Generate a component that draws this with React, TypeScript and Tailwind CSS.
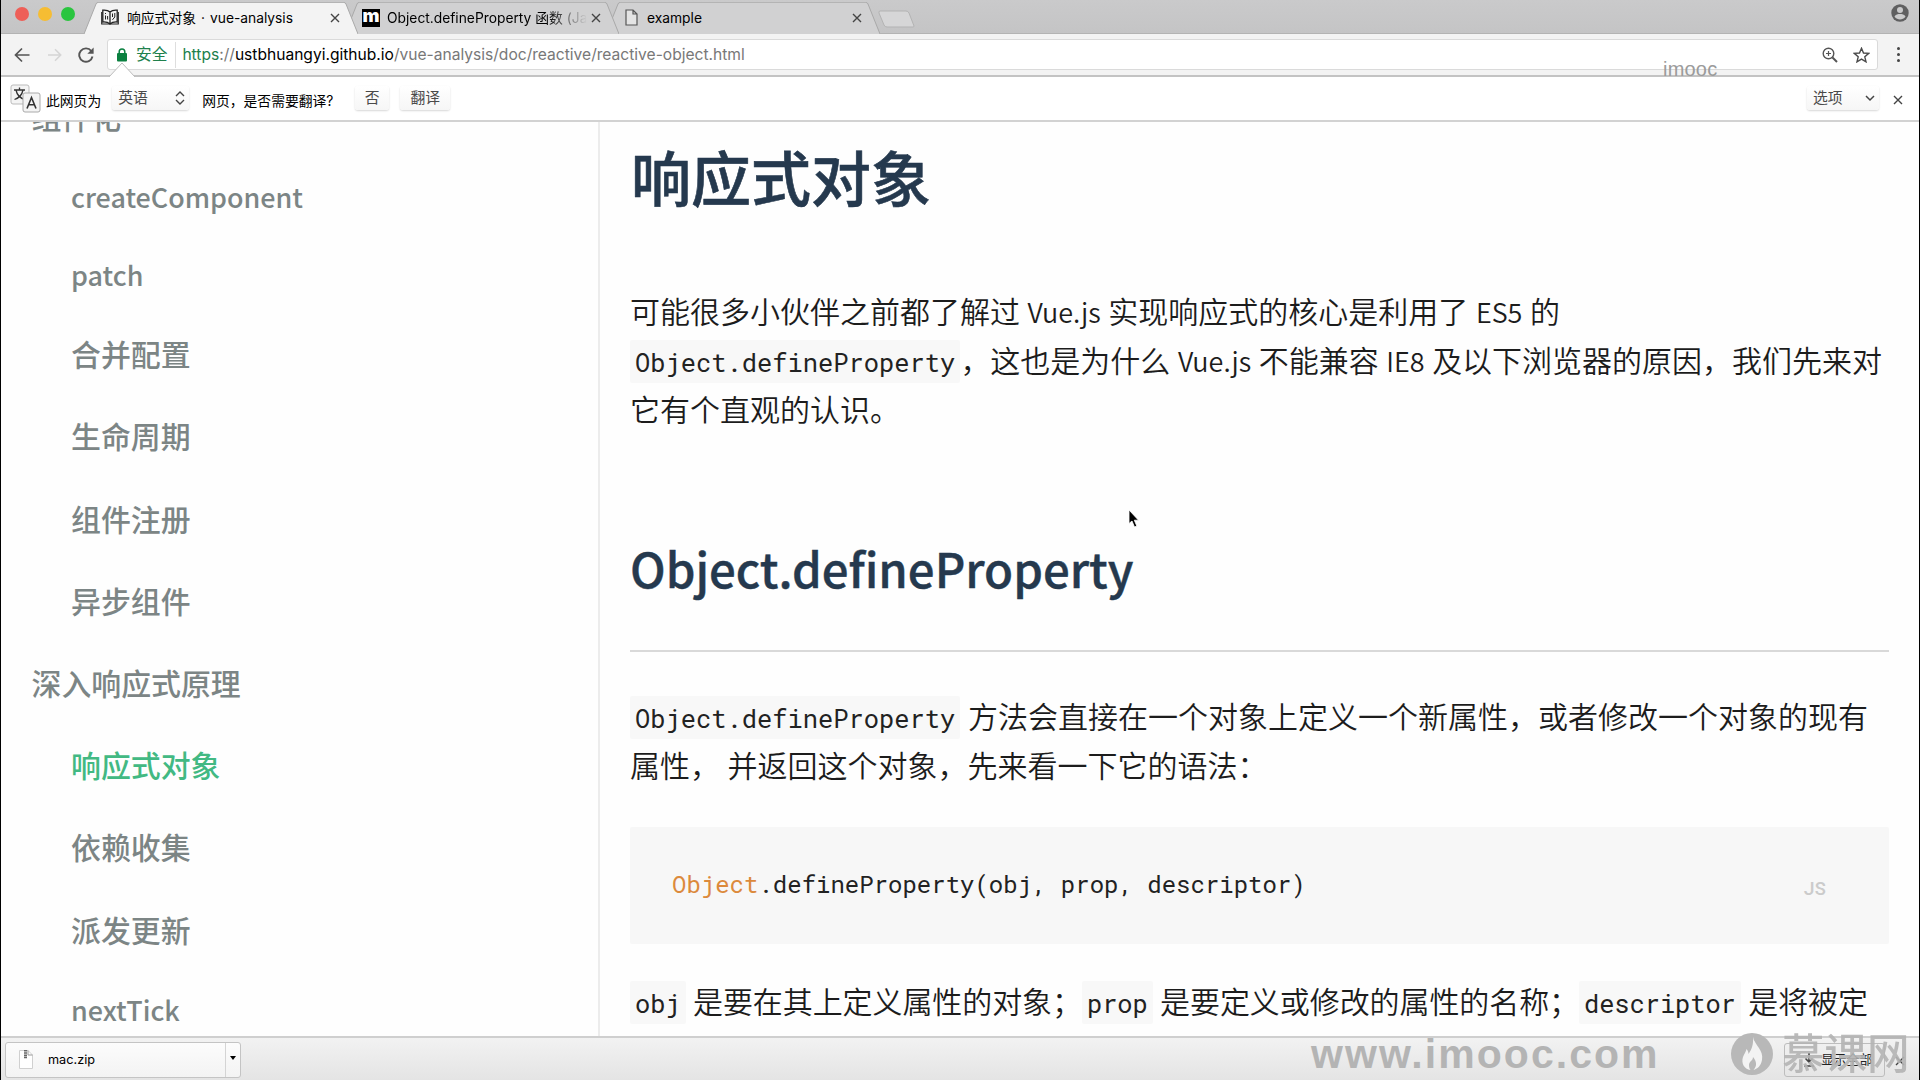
import React from 'react';

function TabEdge({ flip = false, fill }: { flip?: boolean; fill: string }) {
  return (
    <svg width="14" height="32" viewBox="0 0 14 32" className={flip ? 'shrink-0 -scale-x-100' : 'shrink-0'}>
      <path d="M0 32 L12 2 Q12.6 .5 14 .5 V32Z" fill={fill} />
      <path d="M0 32 L12 2 Q12.6 .5 14 .5" fill="none" stroke="#a9a9a9" strokeWidth="1" />
    </svg>
  );
}

function Cross({ className = '' }: { className?: string }) {
  return (
    <svg width="10" height="10" viewBox="0 0 10 10" className={`shrink-0 ${className}`}>
      <path d="M1 1 L9 9 M9 1 L1 9" stroke="#444" strokeWidth="1.4" />
    </svg>
  );
}

function Tab({ icon, title, active = false, className = '' }: { icon: React.ReactNode; title: React.ReactNode; active?: boolean; className?: string }) {
  const fill = active ? '#f3f3f3' : '#d1d1d2';
  return (
    <div className={`relative flex h-8 w-[274px] shrink-0 ${className}`}>
      <TabEdge fill={fill} />
      <div className={`flex min-w-0 flex-1 items-center border-t border-[#b4b4b4] pr-1 pb-[2px] pl-[3px] ${active ? 'bg-[#f3f3f3]' : 'bg-[#d1d1d2]'}`}>
        {icon}
        <span className="min-w-0 flex-1 overflow-hidden text-[13.8px] leading-5 whitespace-nowrap text-black">{title}</span>
        <Cross />
      </div>
      <TabEdge flip fill={fill} />
    </div>
  );
}

function BookIcon() {
  return (
    <svg width="18" height="17" viewBox="0 0 18 17" className="mr-2 shrink-0" fill="none" stroke="#222" strokeWidth="1.3">
      <path d="M9 3 C7 1.2 4 1 1.8 1.2 V13 C4.500 12.800 7 13.200 9 15 C11 13.200 13.500 12.800 16.200 13 V1.200 C14 1 11 1.200 9 3Z M9 3 V15" />
      <path d="M.7 3 V15 H17.300 V3" strokeWidth="1.100" />
      <path d="M4.500 4 V5 M4.500 6.500 V10.500 M6.600 7 V10.500 M11.500 4.500 V8 M13.800 4 V8 L11.500 10.800" strokeWidth="1" />
    </svg>
  );
}

function FileIcon() {
  return (
    <svg width="13" height="17" viewBox="0 0 13 17" className="ml-[2px] mr-[9px] shrink-0" fill="#e4e4e4" stroke="#555" strokeWidth="1.200">
      <path d="M1 1 H8 L12 5 V16 H1Z M8 1 V5 H12" />
    </svg>
  );
}

function PushButton({ children, className = '' }: { children: React.ReactNode; className?: string }) {
  return (
    <div className={`-mt-px flex h-6 shrink-0 items-center rounded-[3px] bg-gradient-to-b from-white to-[#f6f6f6] text-[14.800px] leading-none text-[#4a4a4a] shadow-[0_1px_2px_rgba(0,0,0,0.16)] ${className}`}>
      {children}
    </div>
  );
}

function TitleBar() {
  return (
    <div className="flex h-[34px] shrink-0 items-start border-b border-[#b3b3b3] bg-gradient-to-b from-[#cacacb] to-[#c4c4c5]">
      <div className="flex w-[83px] shrink-0 gap-[9px] pt-[7px] pl-[14px]">
        <span className="size-[14px] rounded-full bg-[#ee5f58]" />
        <span className="size-[14px] rounded-full bg-[#f6bd33]" />
        <span className="size-[14px] rounded-full bg-[#2ac53f]" />
      </div>
      <div className="mt-[2px] flex flex-1">
        <Tab className="z-30 -mb-px" active icon={<BookIcon />} title={<span>响应式对象<span className="mx-[5px]">·</span>vue-analysis</span>} />
        <Tab
          className="z-20 -ml-[13px]"
          icon={<span className="mr-[7px] flex size-[18px] shrink-0 items-center justify-center bg-black pb-[3px] text-[18px] leading-none font-black text-white">m</span>}
          title={
            <span className="bg-gradient-to-r from-black from-80% to-transparent bg-clip-text text-transparent">Object.defineProperty 函数 (Ja</span>
          }
        />
        <Tab className="z-10 -ml-[13px]" icon={<FileIcon />} title="example" />
        <svg width="38" height="20" viewBox="0 0 38 20" className="mt-[7px] -ml-[3px]">
          <path d="M3 2 H29 Q31 2 32 4 L37 17 Q37 18 36 18 H10 Q8 18 7 16 L2 4 Q1.500 2 3 2Z" fill="#d6d6d7" stroke="#b3b3b3" />
        </svg>
      </div>
      <svg width="18" height="18" viewBox="0 0 18 18" className="mt-1 mr-[10px]">
        <circle cx="9" cy="9" r="8.700" fill="#5f5f60" />
        <circle cx="9" cy="6" r="3" fill="#cacacb" />
        <path d="M3.500 12.500 C4.500 10.500 7 10 9 10 C11 10 13.500 10.500 14.500 12.500 C13 14.700 11 15.500 9 15.500 C7 15.500 5 14.700 3.500 12.500Z" fill="#cacacb" />
      </svg>
    </div>
  );
}

function Toolbar() {
  return (
    <div className="relative flex h-[43px] shrink-0 items-center border-b-2 border-[#c3c3c3] bg-[#f3f3f3]">
      <svg width="16" height="16" viewBox="0 0 16 16" className="ml-[13px]" fill="none" stroke="#555" strokeWidth="1.700">
        <path d="M15.500 8 H2 M8 1.500 L1.500 8 L8 14.500" />
      </svg>
      <svg width="14" height="14" viewBox="0 0 16 16" className="ml-[18px]" fill="none" stroke="#d5d5d5" strokeWidth="1.800">
        <path d="M0 8 H14 M8 1.500 L14.500 8 L8 14.500" />
      </svg>
      <svg width="16" height="16" viewBox="0 0 16 16" className="ml-4" fill="none" stroke="#555" strokeWidth="1.900">
        <path d="M13.300 4 A6.700 6.700 0 1 0 14.500 9.500" />
        <path d="M15.600 .5 V6.800 H9.300Z" fill="#555" stroke="none" />
      </svg>
      <div className="ml-[13px] flex h-[31px] w-[1771px] items-center rounded-[3px] border border-[#dadada] bg-white">
        <svg width="10" height="14" viewBox="0 0 10 14" className="ml-[9px]">
          <rect y="5" width="10" height="8.500" rx="1" fill="#0b8040" />
          <path d="M2.200 6 V3.800 A2.800 2.800 0 0 1 7.800 3.800 V6" fill="none" stroke="#0b8040" strokeWidth="1.500" />
        </svg>
        <span className="ml-[9px] text-[15.700px] text-[#20804c]">安全</span>
        <span className="ml-2 h-[26px] w-px bg-[#dedede]" />
        <span className="ml-[6px] flex-1 text-[15.580px] whitespace-nowrap text-[#787878]">
          <span className="text-[#20804c]">https</span>://<span className="text-black">ustbhuangyi.github.io</span>/vue-analysis/doc/reactive/reactive-object.html
        </span>
        <svg width="16" height="16" viewBox="0 0 16 16" fill="none" stroke="#555" strokeWidth="1.400">
          <circle cx="6.500" cy="6.500" r="5.300" />
          <path d="M10.500 10.500 L15 15" strokeWidth="1.900" />
          <path d="M4 6.500 H9 M6.500 4 V9" strokeWidth="1.200" />
        </svg>
        <svg width="17" height="16" viewBox="0 0 17 16" className="mr-[7px] ml-[15px]" fill="none" stroke="#4a4a4a" strokeWidth="1.400">
          <path d="M8.500 1.300 L10.500 6 L15.700 6.400 L11.800 9.800 L13 14.800 L8.500 12.100 L4 14.800 L5.200 9.800 L1.300 6.400 L6.500 6Z" />
        </svg>
      </div>
      <div className="ml-[19px] flex flex-col gap-[3px]">
        <span className="size-[3px] rounded-full bg-[#444]" />
        <span className="size-[3px] rounded-full bg-[#444]" />
        <span className="size-[3px] rounded-full bg-[#444]" />
      </div>
      <svg width="28" height="16" viewBox="0 0 28 16" className="absolute top-[28px] left-[107px]">
        <path d="M1 15 L14 1 L27 15 V16 H1Z" fill="#fff" />
        <path d="M1 15 L14 1 L27 15" fill="none" stroke="#bdbdbd" />
      </svg>
      <span className="absolute top-[24px] left-[1662px] font-['Liberation_Sans'] text-[20px] leading-[23px] tracking-[.2px] text-[#9b9b9b]">imooc</span>
    </div>
  );
}

function TranslateBar() {
  return (
    <div className="flex h-[45px] shrink-0 items-center border-b-2 border-[#d2d2d2] bg-white text-[13.800px] text-black">
      <svg width="32" height="30" viewBox="0 0 32 30" className="ml-[9px]">
        <rect x="1" y="1" width="18" height="19" rx="2" fill="#f4f4f4" stroke="#bbb" />
        <path d="M4 6 H15 M9.500 3.500 V6 M6 6 C7 11 10 14 14.500 15.500 M13 6 C12 11 9 14 4.500 15.500" fill="none" stroke="#333" strokeWidth="1.300" />
        <rect x="13" y="9" width="17" height="19" rx="2" fill="#f4f4f4" stroke="#aaa" />
        <path d="M17 24.500 L21.500 13.500 L26 24.500 M18.500 20.800 H24.500" fill="none" stroke="#333" strokeWidth="1.600" />
      </svg>
      <span className="mt-[5px] ml-1">此网页为</span>
      <PushButton className="ml-[11px] w-[77px] justify-between pr-1 pl-[6px]">
        英语
        <svg width="10" height="14" viewBox="0 0 10 14" fill="none" stroke="#444" strokeWidth="1.400">
          <path d="M1 5 L5 1 L9 5 M1 9 L5 13 L9 9" />
        </svg>
      </PushButton>
      <span className="mt-[5px] ml-[13px] w-[153px] whitespace-nowrap">网页，是否需要翻译?</span>
      <PushButton className="w-[34px] justify-center">否</PushButton>
      <PushButton className="ml-[11px] w-[50px] justify-center">翻译</PushButton>
      <PushButton className="mr-[14px] ml-auto w-[72px] justify-between pr-1 pl-[6px]">
        选项
        <svg width="10" height="7" viewBox="0 0 10 7" fill="none" stroke="#444" strokeWidth="1.500">
          <path d="M1 1 L5 5 L9 1" />
        </svg>
      </PushButton>
      <Cross className="mt-[2px] mr-[16px]" />
    </div>
  );
}

type NavItem = { label: string; kind: 'section' | 'cjk' | 'latin' | 'active' };

const nav: NavItem[] = [
  { label: '组件化', kind: 'section' },
  { label: 'createComponent', kind: 'latin' },
  { label: 'patch', kind: 'latin' },
  { label: '合并配置', kind: 'cjk' },
  { label: '生命周期', kind: 'cjk' },
  { label: '组件注册', kind: 'cjk' },
  { label: '异步组件', kind: 'cjk' },
  { label: '深入响应式原理', kind: 'section' },
  { label: '响应式对象', kind: 'active' },
  { label: '依赖收集', kind: 'cjk' },
  { label: '派发更新', kind: 'cjk' },
  { label: 'nextTick', kind: 'latin' },
];

const navStyle = {
  section: 'pl-[30.500px] text-[29.900px] leading-[82.200px]',
  cjk: 'pl-[70px] text-[29.900px] leading-[82.200px]',
  active: 'pl-[70px] text-[29.900px] leading-[82.200px] text-[#42b983]',
  latin: 'pt-px -mb-[1.500px] pl-[70px] text-[26.900px] leading-[78px]',
};

function Sidebar() {
  return (
    <nav className="w-[599px] shrink-0 overflow-hidden border-r-2 border-[#ececec] font-medium text-[#7c8585]">
      <div className="-mt-[47px]">
        {nav.map((n) => (
          <div key={n.label} className={navStyle[n.kind]}>
            {n.label}
          </div>
        ))}
      </div>
    </nav>
  );
}

function En({ children }: { children: React.ReactNode }) {
  return <span className="text-[27px] leading-none [word-spacing:1.500px]">{children}</span>;
}

function Code({ children }: { children: React.ReactNode }) {
  return (
    <code className='rounded-[2px] bg-[#f8f8f8] px-[5px] pt-[5px] pb-1 font-["Roboto_Mono","Liberation_Mono",monospace] text-[25.430px] leading-none font-normal text-[#222]'>
      {children}
    </code>
  );
}

function Line({ children, className = '' }: { children: React.ReactNode; className?: string }) {
  return <div className={`h-[49px] leading-[49px] whitespace-pre ${className}`}>{children}</div>;
}

function Article() {
  return (
    <main className="min-w-0 flex-1 overflow-hidden pt-[14px] pr-[30px] pl-[30px] text-[30px] font-[350] text-[#1c1c1c]">
      <h1 className="h-20 pl-px text-[60px] leading-[80px] font-medium text-[#25394e] [-webkit-text-stroke:0.6px]">响应式对象</h1>
      <div className="mt-[70px]">
        <Line>
          可能很多小伙伴之前都了解过<En> Vue.js </En>实现响应式的核心是利用了<En> ES5 </En>的
        </Line>
        <Line>
          <Code>Object.defineProperty</Code>，这也是为什么<En> Vue.js </En>不能兼容<En> IE8 </En>及以下浏览器的原因，我们先来对
        </Line>
        <Line>它有个直观的认识。</Line>
      </div>
      <h2 className="mt-[105px] border-b-2 border-[#d9d9d9] pb-[52px] text-[47.300px] leading-[60px] font-medium text-[#25394e] [-webkit-text-stroke:0.4px]">Object.defineProperty</h2>
      <div className="mt-[39px]">
        <Line>
          <Code>Object.defineProperty</Code>
          <En> </En>方法会直接在一个对象上定义一个新属性，或者修改一个对象的现有
        </Line>
        <Line>
          属性，<En> </En>并返回这个对象，先来看一下它的语法：
        </Line>
      </div>
      <pre className="mt-[38px] flex h-[117px] items-center justify-between rounded-[2px] bg-[#f7f7f7] pr-[63px] pl-[42px] text-[#222]">
        <code className='-mt-[3px] font-["Roboto_Mono","Liberation_Mono",monospace] text-[24px] font-normal'>
          <span className="text-[#dc8a3c]">Object</span>.defineProperty(obj, prop, descriptor)
        </code>
        <span className='mt-[5px] font-["Roboto_Mono","Liberation_Mono",monospace] text-[19px] font-medium text-[#cbcbcb]'>JS</span>
      </pre>
      <div className="mt-8">
        <Line className="tracking-[-.08px]">
          <Code>obj</Code>
          <En> </En>是要在其上定义属性的对象；
          <Code>prop</Code>
          <En> </En>是要定义或修改的属性的名称；
          <Code>descriptor</Code>
          <En> </En>是将被定
        </Line>
      </div>
    </main>
  );
}

function DownloadBar() {
  return (
    <footer className="relative flex h-11 shrink-0 items-center border-t-2 border-[#cfcfcf] bg-gradient-to-b from-[#f2f2f2] to-[#e4e4e4]">
      <div className="mt-px ml-1 flex h-9 w-[236px] items-center rounded-[3px] border border-[#c4c4c4] bg-gradient-to-b from-[#fcfcfc] to-[#f3f3f3]">
        <svg width="14" height="19" viewBox="0 0 14 19" className="ml-[13px]">
          <path d="M.5 .5 H9 L13.500 5 V18.500 H.5Z" fill="#fff" stroke="#d0d0d0" />
          <path d="M6.500 0 V9" stroke="#666" strokeWidth="3" strokeDasharray="1.500 .7" />
          <path d="M9 .5 V5 H13.500" fill="none" stroke="#999" />
        </svg>
        <span className="ml-[15px] flex-1 text-[12.700px] text-black">mac.zip</span>
        <span className="flex h-full w-[15px] items-center justify-center border-l border-[#d4d4d4] pb-1">
          <span className="border-x-[3px] border-t-4 border-x-transparent border-t-black" />
        </span>
      </div>
      <div className="mt-px mr-[10px] ml-auto flex h-[34px] w-[101px] items-center rounded-[3px] border border-[#bdbdbd] pl-[18px] text-[12.800px] whitespace-nowrap text-[#222]">
        <svg width="12" height="14" viewBox="0 0 12 14" className="mr-[6px] shrink-0" fill="none" stroke="#444" strokeWidth="1.600">
          <path d="M6 0 V9 M2.500 5.500 L6 9 L9.500 5.500 M1 13 H11" />
        </svg>
        显示全部
      </div>
      <Cross className="mt-1 mr-[14px]" />
      <div className="absolute -top-[8px] left-[1310px] flex h-12 items-center text-[#b4b4b4]">
        <span className="w-[420px] font-['Liberation_Sans'] text-[41px] leading-none font-bold tracking-[2.050px]">www.imooc.com</span>
        <svg width="42" height="42" viewBox="0 0 42 42" className="shrink-0">
          <circle cx="21" cy="21" r="21" fill="#b8b8b8" />
          <path d="M22 4 C23.500 12 33 17 31 27 C30 33 26 36 22.500 37 C26 33 26 29 22 24 C22 28 18 28 18 32 C18 34 18.500 36 19.500 37 C13 36 10 30 12 24 C13 21 15 19 15.500 16 C17 18 17.500 19 17.500 21 C21 16 22.500 11 22 4Z" fill="#f3f3f3" />
        </svg>
        <span className="ml-[9px] text-[42.500px] leading-none font-medium opacity-90">慕课网</span>
      </div>
    </footer>
  );
}

export default function App() {
  return (
    <div className='relative flex h-[1080px] w-[1920px] flex-col overflow-hidden border-x border-black bg-white font-[Inter,"Noto_Sans_CJK_SC",sans-serif]'>
      <TitleBar />
      <Toolbar />
      <TranslateBar />
      <div className='flex min-h-0 flex-1 overflow-hidden bg-[#fefefe] font-["Noto_Sans_CJK_SC",sans-serif]'>
        <Sidebar />
        <Article />
      </div>
      <DownloadBar />
      <svg width="14" height="20" viewBox="0 0 14 20" className="absolute top-[509px] left-[1127px]">
        <path d="M1 1 V14.500 L4 12 L6.500 18 L8.800 17 L6.300 11.200 H10.500Z" fill="#000" stroke="#fff" strokeWidth=".8" />
      </svg>
    </div>
  );
}
